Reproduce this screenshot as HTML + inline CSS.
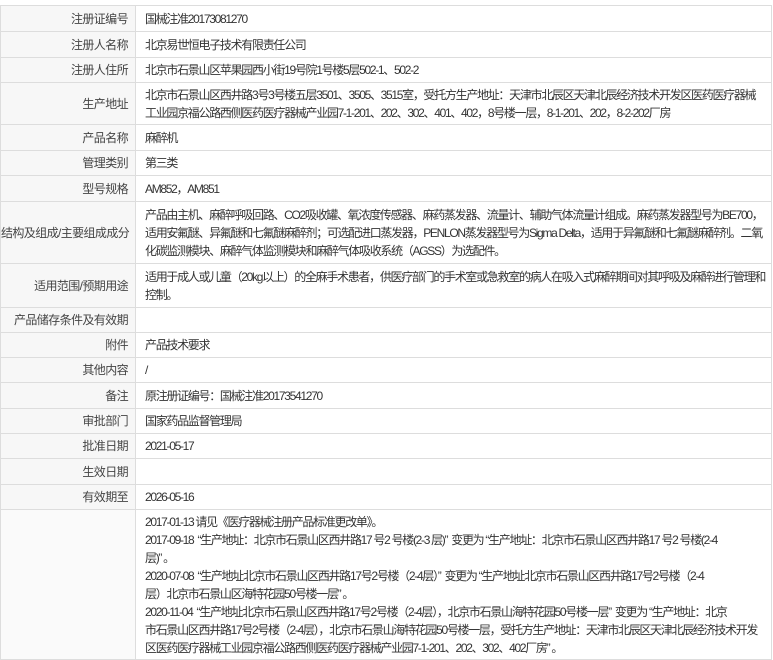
<!DOCTYPE html>
<html><head><meta charset="utf-8"><style>
body{margin:0;background:#fff;font-family:"Liberation Sans","Noto Sans CJK SC",sans-serif;font-size:12px;color:#333;overflow:hidden;}
table{position:absolute;left:0;top:5px;width:772px;border-collapse:collapse;table-layout:fixed;}
td{border:1px solid #ddd;line-height:18px;padding:0 2px 0 9px;vertical-align:middle;letter-spacing:-1.3px;white-space:nowrap;overflow:hidden;}
td.l{width:127px;text-align:right;background:#f7f7f7;color:#444;padding:0 7px 0 0;letter-spacing:-0.6px;}
</style></head><body>
<table>
<tr style="height:26px"><td class="l">注册证编号</td><td>国械注准20173081270</td></tr>
<tr style="height:26px"><td class="l">注册人名称</td><td>北京易世恒电子技术有限责任公司</td></tr>
<tr style="height:25px"><td class="l">注册人住所</td><td>北京市石景山区苹果园西小街19号院1号楼5层502-1、502-2</td></tr>
<tr style="height:42px"><td class="l">生产地址</td><td>北京市石景山区西井路3号3号楼五层3501、3505、3515室，受托方生产地址：天津市北辰区天津北辰经济技术开发区医药医疗器械<br>工业园京福公路西侧医药医疗器械产业园7-1-201、202、302、401、402，8号楼一层，8-1-201、202，8-2-202厂房</td></tr>
<tr style="height:26px"><td class="l">产品名称</td><td>麻醉机</td></tr>
<tr style="height:25px"><td class="l">管理类别</td><td>第三类</td></tr>
<tr style="height:26px"><td class="l">型号规格</td><td>AM852，AM851</td></tr>
<tr style="height:62px"><td class="l">结构及组成/主要组成成分</td><td>产品由主机、麻醉呼吸回路、CO2吸收罐、氧浓度传感器、麻药蒸发器、流量计、辅助气体流量计组成。麻药蒸发器型号为BE700，<br>适用安氟醚、异氟醚和七氟醚麻醉剂；可选配进口蒸发器，PENLON蒸发器型号为Sigma Delta，适用于异氟醚和七氟醚麻醉剂。二氧<br>化碳监测模块、麻醉气体监测模块和麻醉气体吸收系统（AGSS）为选配件。</td></tr>
<tr style="height:44px"><td class="l">适用范围/预期用途</td><td>适用于成人或儿童（20kg以上）的全麻手术患者，供医疗部门的手术室或急救室的病人在吸入式麻醉期间对其呼吸及麻醉进行管理和<br>控制。</td></tr>
<tr style="height:25px"><td class="l">产品储存条件及有效期</td><td></td></tr>
<tr style="height:25px"><td class="l">附件</td><td>产品技术要求</td></tr>
<tr style="height:25px"><td class="l">其他内容</td><td>/</td></tr>
<tr style="height:26px"><td class="l">备注</td><td>原注册证编号：国械注准20173541270</td></tr>
<tr style="height:25px"><td class="l">审批部门</td><td>国家药品监督管理局</td></tr>
<tr style="height:25px"><td class="l">批准日期</td><td>2021-05-17</td></tr>
<tr style="height:26px"><td class="l">生效日期</td><td></td></tr>
<tr style="height:25px"><td class="l">有效期至</td><td>2026-05-16</td></tr>
<tr style="height:150px"><td class="l" style="background:#fafafa"></td><td style="vertical-align:top;padding-top:3px">2017-01-13 请见《医疗器械注册产品标准更改单》。<br>2017-09-18 &nbsp;“生产地址：北京市石景山区西井路17 号2 号楼(2-3 层)” &nbsp;变更为 “生产地址：北京市石景山区西井路17 号2 号楼(2-4<br>层)” 。<br>2020-07-08 &nbsp;“生产地址北京市石景山区西井路17号2号楼（2-4层）” &nbsp;变更为 “生产地址北京市石景山区西井路17号2号楼（2-4<br>层）北京市石景山区海特花园50号楼一层” 。<br>2020-11-04 &nbsp;“生产地址北京市石景山区西井路17号2号楼（2-4层），北京市石景山海特花园50号楼一层” &nbsp;变更为 “生产地址：北京<br>市石景山区西井路17号2号楼（2-4层），北京市石景山海特花园50号楼一层，受托方生产地址：天津市北辰区天津北辰经济技术开发<br>区医药医疗器械工业园京福公路西侧医药医疗器械产业园7-1-201、202、302、402厂房” 。</td></tr>
</table>
</body></html>
